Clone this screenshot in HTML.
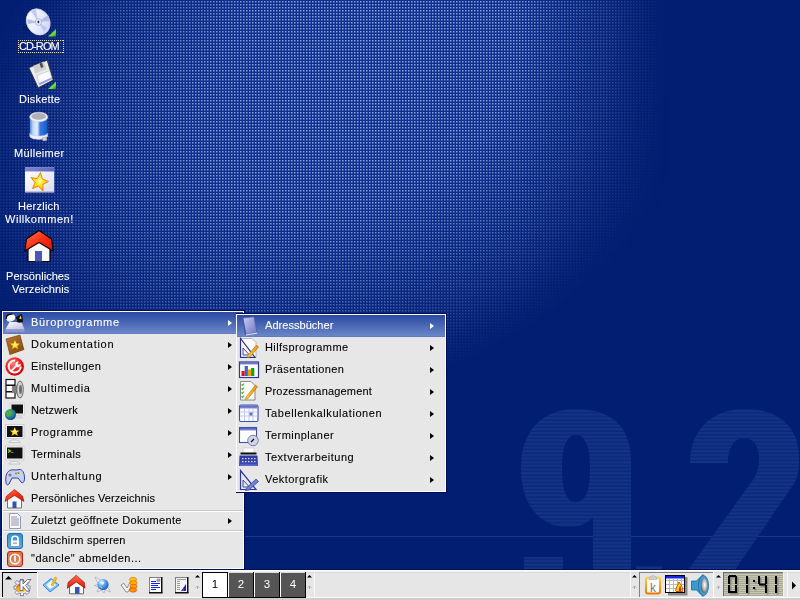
<!DOCTYPE html>
<html><head><meta charset="utf-8">
<style>
*{margin:0;padding:0;box-sizing:border-box}
html,body{width:800px;height:600px;overflow:hidden}
body{position:relative;background:#032274;font-family:"Liberation Sans",sans-serif;font-size:12px}
.abs{position:absolute}
#bg{position:absolute;left:0;top:0}
.lbl{position:absolute;color:#fff;font-size:11px;white-space:pre;line-height:13px;will-change:transform;-webkit-text-stroke:0.1px currentColor}
.menu{position:absolute;background:#e7e7e7;border:1px solid #fafafa;box-shadow:0 0 0 1px #000c58}
.it{position:absolute;left:0;right:0;height:22px}
.it .t{position:absolute;left:28px;top:3px;font-size:11px;line-height:14px;white-space:pre;color:#000;will-change:transform;-webkit-text-stroke:0.1px currentColor}
.hl{background:linear-gradient(#2a49a2,#6a86c8 95%,#5a72ba)}
.hl .t{color:#fff}
.arr{position:absolute;width:0;height:0;border-top:3.8px solid transparent;border-bottom:3.8px solid transparent;border-left:4.7px solid #000}
.hl .arr{border-left-color:#fff}
.ic{position:absolute}
.sep{position:absolute;left:0;right:0;height:2px;border-top:1px solid #c6c6c6;border-bottom:1px solid #fff}
#task{position:absolute;left:0;top:569px;width:800px;height:31px;background:#e6e6e6}
</style></head><body>

<!-- background -->
<svg id="bg" width="800" height="600" viewBox="0 0 800 600">
 <defs>
  <pattern id="grid" width="3" height="3" patternUnits="userSpaceOnUse">
   <rect width="3" height="3" fill="#12308c"/>
   <rect x="0" y="1" width="1" height="1" fill="#8eacdf"/>
   <rect x="1" y="1" width="1" height="1" fill="#4c6cc0"/>
   <rect x="0" y="2" width="1" height="1" fill="#4c6cc0"/>
   <rect x="1" y="2" width="1" height="1" fill="#3252a8"/>
  </pattern>
  <radialGradient id="fade" cx="360" cy="80" r="430" gradientUnits="userSpaceOnUse" gradientTransform="translate(360 80) rotate(-30) scale(1 0.70) translate(-360 -80)">
   <stop offset="0" stop-color="#fff" stop-opacity="1"/>
   <stop offset="0.4" stop-color="#fff" stop-opacity="0.92"/>
   <stop offset="0.65" stop-color="#fff" stop-opacity="0.6"/>
   <stop offset="0.82" stop-color="#fff" stop-opacity="0.3"/>
   <stop offset="0.93" stop-color="#fff" stop-opacity="0.08"/>
   <stop offset="1" stop-color="#fff" stop-opacity="0"/>
  </radialGradient>
  <linearGradient id="cutg" x1="520" y1="0" x2="668" y2="0" gradientUnits="userSpaceOnUse">
   <stop offset="0" stop-color="#fff" stop-opacity="1"/>
   <stop offset="0.6" stop-color="#fff" stop-opacity="0.55"/>
   <stop offset="1" stop-color="#fff" stop-opacity="0"/>
  </linearGradient>
  <mask id="cut"><rect width="800" height="600" fill="url(#cutg)"/></mask>
  <mask id="m"><rect width="800" height="600" fill="url(#fade)"/></mask>
  <pattern id="stripes" width="8" height="3.66" patternUnits="userSpaceOnUse">
   <rect width="8" height="3.66" fill="#143387"/>
   <rect y="2.2" width="8" height="1.46" fill="#0a287a"/>
  </pattern>
 </defs>
 <rect width="800" height="600" fill="#021e72"/>
 <g mask="url(#cut)"><rect width="800" height="600" fill="url(#grid)" mask="url(#m)"/></g>
 <rect x="0" y="536" width="800" height="1" fill="#18368e"/>
 <g fill="url(#stripes)" fill-rule="evenodd">
  <path d="M576 409 C543 409 521 430 521 468 C521 505 540 527 568 527 C580 527 588 523 593 517 L593 570 L631 570 L631 462 C631 424 609 409 576 409 Z M576 435 C586 435 590 448 590 468 C590 490 586 502 576 502 C566 502 562 490 562 468 C562 448 566 435 576 435 Z"/>
  <path d="M524 557 L563 557 L563 570 L524 570 Z"/>
  <path d="M636 566 L662 566 L662 570 L636 570 Z"/>
  <path d="M744 409 C712 409 690 430 690 463 L728 463 C728 448 734 438 744 438 C754 438 759 447 759 458 C759 468 757 474 753 480 L688 570 L735 570 L795 482 C798 476 799 468 799 458 C799 426 778 409 744 409 Z"/>
 </g>
</svg>

<!-- desktop icons -->
<svg width="80" height="300" viewBox="0 0 80 300" style="position:absolute;left:0;top:0">
 <defs>
  <linearGradient id="discg" x1="0" y1="0" x2="1" y2="1"><stop offset="0" stop-color="#ffffff"/><stop offset="0.5" stop-color="#e8ecff"/><stop offset="1" stop-color="#c8d0f0"/></linearGradient>
  <linearGradient id="greeng" x1="0" y1="0" x2="1" y2="1"><stop offset="0" stop-color="#108a10"/><stop offset="0.65" stop-color="#70e040"/><stop offset="1" stop-color="#10900c"/></linearGradient>
  <linearGradient id="trashg" x1="0" y1="0" x2="1" y2="0"><stop offset="0" stop-color="#4a80d8"/><stop offset="0.18" stop-color="#c0d8fa"/><stop offset="0.42" stop-color="#e4eeff"/><stop offset="0.58" stop-color="#3a7ae0"/><stop offset="1" stop-color="#1458c8"/></linearGradient>
  <linearGradient id="winbody" x1="0" y1="0" x2="1" y2="1"><stop offset="0" stop-color="#ffffff"/><stop offset="1" stop-color="#dcdcf4"/></linearGradient>
  <linearGradient id="titleg" x1="0" y1="0" x2="1" y2="0"><stop offset="0" stop-color="#8088d0"/><stop offset="1" stop-color="#5a68c0"/></linearGradient>
  <radialGradient id="starg" cx="0.5" cy="0.45" r="0.55"><stop offset="0" stop-color="#fff8a0"/><stop offset="0.6" stop-color="#ffd800"/><stop offset="1" stop-color="#f0a000"/></radialGradient>
  <linearGradient id="roofd" x1="0" y1="0" x2="1" y2="1"><stop offset="0" stop-color="#ff8060"/><stop offset="0.5" stop-color="#ff3010"/><stop offset="1" stop-color="#e01010"/></linearGradient>
 </defs>
 <!-- CD -->
 <ellipse cx="32" cy="28" rx="9" ry="4" fill="#001040" opacity="0.35"/>
 <ellipse cx="38.2" cy="21.9" rx="11.5" ry="13.5" transform="rotate(-28 38.2 21.9)" fill="url(#discg)" stroke="#c8d0e8" stroke-width="0.8"/>
 <path d="M38.2 21.9 L31 11 A13 13 0 0 1 36 9.5 Z M38.2 21.9 L47 28 A13 13 0 0 1 44 32 Z" fill="#b8c0ec" opacity="0.8"/>
 <path d="M38.2 21.9 L28 24 A13 13 0 0 1 27.5 19 Z M38.2 21.9 L48 15 A13 13 0 0 1 49.5 21 Z" fill="#a8b4e8" opacity="0.8"/>
 <ellipse cx="38.4" cy="22" rx="3" ry="3.4" fill="#f4f4ff" stroke="#8890b0" stroke-width="0.6"/>
 <ellipse cx="38.4" cy="22" rx="1" ry="1.4" fill="#203070"/>
 <path d="M48 36.5 L56 29 L56 36.5 Z" fill="url(#greeng)"/>
 <!-- floppy -->
 <path d="M28.9 67.7 L47.2 60.2 L53.2 80 L38.2 87.8 Z" fill="#ececec" stroke="#333" stroke-width="0.9" stroke-linejoin="round"/>
 <path d="M33 66 L44 61.5 L46.5 69 L35.5 73.5 Z" fill="#d0d0d0"/>
 <path d="M39.5 63.5 L42 62.5 L43.5 67 L41 68 Z" fill="#505050"/>
 <path d="M37 75.5 L49.5 70.5 L52 79 L39.5 85 Z" fill="#fafaff" stroke="#b0b0b0" stroke-width="0.5"/>
 <path d="M39 83 L51.5 77.5 L52 79 L39.5 85 Z" fill="#90a0f0"/>
 <path d="M48 89 L56 81.5 L56 89 Z" fill="url(#greeng)"/>
 <!-- trash -->
 <path d="M29.8 117 L29.8 136 C29.8 140 47.6 140 47.6 136 L47.6 117 Z" fill="url(#trashg)"/>
 <path d="M29.8 133 C29.8 137 47.6 137 47.6 133 L47.6 136 C47.6 140.5 29.8 140.5 29.8 136 Z" fill="#eef2fa" stroke="#b8c0d8" stroke-width="0.5"/>
 <ellipse cx="38.7" cy="117" rx="9.1" ry="4.8" fill="#f2f2f6" stroke="#c8c8d8" stroke-width="0.6"/>
 <ellipse cx="38.7" cy="116.4" rx="7.3" ry="3.3" fill="#b0b0bc"/>
 <path d="M42 138 L46.5 137 L47 140.5 L43 141 Z" fill="#d8d8e0" stroke="#808090" stroke-width="0.5"/>
 <!-- welcome window -->
 <rect x="25" y="167.5" width="29.2" height="24.8" fill="url(#winbody)"/>
 <rect x="25" y="167.5" width="29.2" height="4" fill="url(#titleg)"/>
 <rect x="25" y="191.5" width="29.2" height="1" fill="#9898c0"/>
 <path d="M40.5 172.5 L42.4 179 L48.5 181.5 L42.9 184.4 L43.0 191.0 L38.5 186.2 L32.5 188.5 L35.0 182.6 L31.0 177.5 L37.2 178.6 Z" fill="url(#starg)" stroke="#e08800" stroke-width="0.9" stroke-linejoin="round"/>
  <pattern id="dotsh" width="2" height="1" patternUnits="userSpaceOnUse"><rect width="1" height="1" fill="#f0dc70"/></pattern>
 <pattern id="dotsv" width="1" height="2" patternUnits="userSpaceOnUse"><rect width="1" height="1" fill="#f0dc70"/></pattern>
 <rect x="18" y="40" width="46" height="1" fill="url(#dotsh)"/>
 <rect x="18" y="52" width="46" height="1" fill="url(#dotsh)"/>
 <rect x="18" y="40" width="1" height="13" fill="url(#dotsv)"/>
 <rect x="63" y="40" width="1" height="13" fill="url(#dotsv)"/>
<!-- home -->
 <path d="M28 245 L28 261.5 L50 261.5 L50 245 L39 238 Z" fill="#fafafa" stroke="#000" stroke-width="1.2" stroke-linejoin="round"/>
 <path d="M39 230.5 L26.5 239 L24.8 251 L39 242.5 L53.2 251 L51.5 239 Z" fill="url(#roofd)" stroke="#000" stroke-width="1.1" stroke-linejoin="round"/>
 <rect x="35" y="251" width="7" height="10.5" fill="#4858b8"/>
</svg>
<!-- desktop labels -->
<div class="lbl" style="left:19px;top:40px;letter-spacing:-0.9px">CD-ROM</div>
<div class="lbl" style="left:19px;top:93px;letter-spacing:0.19px">Diskette</div>
<div class="lbl" style="left:14px;top:147px;letter-spacing:0.31px">Mülleimer</div>
<div class="lbl" style="left:18px;top:200px;letter-spacing:0.25px">Herzlich</div>
<div class="lbl" style="left:5px;top:213px;letter-spacing:0.53px">Willkommen!</div>
<div class="lbl" style="left:6px;top:270px;letter-spacing:0.05px">Persönliches</div>
<div class="lbl" style="left:12px;top:283px;letter-spacing:0.11px">Verzeichnis</div>

<!-- main menu -->
<div class="menu" id="mm" style="left:2px;top:311px;width:242px;height:258px">
 <div class="it hl" style="top:0"><span class="t" style="letter-spacing:0.71px">Büroprogramme</span><i class="arr" style="left:225px;top:8px"></i></div>
 <div class="it" style="top:22px"><span class="t" style="letter-spacing:0.71px">Dokumentation</span><i class="arr" style="left:225px;top:8px"></i></div>
 <div class="it" style="top:44px"><span class="t" style="letter-spacing:0.31px">Einstellungen</span><i class="arr" style="left:225px;top:8px"></i></div>
 <div class="it" style="top:66px"><span class="t" style="letter-spacing:0.64px">Multimedia</span><i class="arr" style="left:225px;top:8px"></i></div>
 <div class="it" style="top:88px"><span class="t" style="letter-spacing:0.13px">Netzwerk</span><i class="arr" style="left:225px;top:8px"></i></div>
 <div class="it" style="top:110px"><span class="t" style="letter-spacing:0.56px">Programme</span><i class="arr" style="left:225px;top:8px"></i></div>
 <div class="it" style="top:132px"><span class="t" style="letter-spacing:0.33px">Terminals</span><i class="arr" style="left:225px;top:8px"></i></div>
 <div class="it" style="top:154px"><span class="t" style="letter-spacing:0.69px">Unterhaltung</span><i class="arr" style="left:225px;top:8px"></i></div>
 <div class="it" style="top:176px"><span class="t" style="letter-spacing:0.07px">Persönliches Verzeichnis</span></div>
 <div class="sep" style="top:198px"></div>
 <div class="it" style="top:200px;height:18px"><span class="t" style="top:1px;letter-spacing:0.36px">Zuletzt geöffnete Dokumente</span><i class="arr" style="left:225px;top:6px"></i></div>
 <div class="sep" style="top:218px"></div>
 <div class="it" style="top:220px;height:18px"><span class="t" style="top:1px;letter-spacing:0.2px">Bildschirm sperren</span></div>
 <div class="it" style="top:238px;height:18px"><span class="t" style="top:1px;letter-spacing:0.49px">"dancle" abmelden...</span></div>
</div>

<!-- main menu icons -->
<svg width="30" height="260" viewBox="0 310 30 260" style="position:absolute;left:0;top:310px">
 <defs>
  <linearGradient id="deskg" x1="0" y1="0" x2="1" y2="1"><stop offset="0" stop-color="#ffffff"/><stop offset="1" stop-color="#b8b8e0"/></linearGradient>
  <linearGradient id="bookg" x1="0" y1="0" x2="1" y2="1"><stop offset="0" stop-color="#c07830"/><stop offset="1" stop-color="#7a4810"/></linearGradient>
  <radialGradient id="redg" cx="0.4" cy="0.35" r="0.7"><stop offset="0" stop-color="#ff8080"/><stop offset="0.6" stop-color="#f01818"/><stop offset="1" stop-color="#c00000"/></radialGradient>
  <radialGradient id="globeg" cx="0.4" cy="0.35" r="0.7"><stop offset="0" stop-color="#60c040"/><stop offset="0.6" stop-color="#2080a0"/><stop offset="1" stop-color="#103080"/></radialGradient>
  <linearGradient id="padg" x1="0" y1="0" x2="1" y2="1"><stop offset="0" stop-color="#e8f0ff"/><stop offset="1" stop-color="#5070c8"/></linearGradient>
  <linearGradient id="lockg" x1="0" y1="0" x2="0" y2="1"><stop offset="0" stop-color="#3890d0"/><stop offset="1" stop-color="#70a8d8"/></linearGradient>
  <linearGradient id="offg" x1="0" y1="0" x2="0" y2="1"><stop offset="0" stop-color="#e07040"/><stop offset="1" stop-color="#d89070"/></linearGradient>
  <radialGradient id="starm" cx="0.5" cy="0.45" r="0.55"><stop offset="0" stop-color="#fff8a0"/><stop offset="0.6" stop-color="#ffd800"/><stop offset="1" stop-color="#f0a000"/></radialGradient>
 </defs>
 <!-- buero -->
 <path d="M5.5 329.5 L9.5 322 L21.5 322 L24.5 329.5 Z" fill="url(#deskg)"/>
 <path d="M5.5 329.5 L24.5 329.5 L24.5 332 L5.5 332 Z" fill="#8e96d0"/>
 <ellipse cx="10.8" cy="318" rx="4.6" ry="3.4" transform="rotate(-18 10.8 318)" fill="#f6f6f6"/>
 <path d="M6.3 318.8 C6 315.5 9 313.6 12.5 314.2" fill="none" stroke="#000" stroke-width="1.3"/>
 <path d="M15.5 317.5 L21.8 313.8 L23 320.5 L18.5 321.5 Z" fill="#0c0c0c"/>
 <path d="M19 318.6 L20.8 315.6 L21.6 319.2 Z" fill="#f0e040"/>
 <ellipse cx="19.8" cy="321.3" rx="3.2" ry="1.4" fill="#0c0c0c"/>
 <!-- doku book -->
 <path d="M6 339 L20 335 L24 350 L10 355 Z" fill="url(#bookg)" stroke="#6a3a08" stroke-width="0.6"/>
 <path d="M10 355 L24 350 L24.3 351.5 L10.5 356 Z" fill="#f0e8d0"/>
 <path d="M15 340 L16.4 343.6 L20 343.6 L17.2 345.9 L18.3 349.5 L15 347.3 L11.7 349.5 L12.8 345.9 L10 343.6 L13.6 343.6 Z" fill="url(#starm)"/>
 <!-- einstellungen -->
 <circle cx="14.7" cy="366.5" r="9.3" fill="url(#redg)"/>
 <circle cx="14.7" cy="366.5" r="6" fill="none" stroke="#fff" stroke-width="2" stroke-dasharray="28 10"/>
 <path d="M10 371 L15.5 365.5 C14.5 363 16.5 361 19 361.5 L17.5 363.5 L18.8 364.8 L20.8 363.4 C21 366 19 368 16.5 367 L11 372.5 Z" fill="#fff"/>
 <!-- multimedia -->
 <rect x="6" y="379.5" width="9" height="18.5" fill="#fff" stroke="#111" stroke-width="1.2"/>
 <rect x="6" y="384.5" width="9" height="1.5" fill="#111"/><rect x="6" y="391" width="9" height="1.5" fill="#111"/>
 <path d="M12 386 L16 386 L21 381 L21 398 L16 393 L12 393 Z" fill="#808080"/>
 <ellipse cx="20" cy="389.5" rx="3.3" ry="8.5" fill="#d0d0d0" stroke="#505050" stroke-width="0.8"/>
 <ellipse cx="20.5" cy="389.5" rx="1.5" ry="4.5" fill="#707070"/>
 <!-- netzwerk -->
 <rect x="10" y="403" width="14.5" height="12" fill="#f0f0f0" stroke="#c8c8c8" stroke-width="0.6"/>
 <rect x="11.5" y="404.5" width="11.5" height="9" fill="#101010"/>
 <path d="M13 418 L22 418 L21 416 L14 416 Z" fill="#e8e8e8" stroke="#b0b0b0" stroke-width="0.5"/>
 <circle cx="10.5" cy="414.5" r="5.5" fill="url(#globeg)"/>
 <path d="M8 411 C10 410 12 411 11 413 C9 414 10 416 8 417 C6 415 6 412 8 411 Z" fill="#50b030"/>
 <!-- programme -->
 <rect x="5.5" y="424.5" width="18.5" height="14" fill="#f4f4f4" stroke="#c0c0c0" stroke-width="0.6"/>
 <rect x="7" y="426" width="15.5" height="11" fill="#101018"/>
 <path d="M14.7 427 L16.1 430.4 L19.7 430.4 L16.9 432.6 L18 436 L14.7 434 L11.4 436 L12.5 432.6 L9.7 430.4 L13.3 430.4 Z" fill="url(#starm)"/>
 <path d="M9 442.5 C9 439 20 439 20 442.5 Z" fill="#f0f0f0" stroke="#a8a8a8" stroke-width="0.6"/>
 <!-- terminals -->
 <rect x="5.5" y="446" width="18.5" height="14" fill="#f4f4f4" stroke="#c0c0c0" stroke-width="0.6"/>
 <rect x="7" y="447.5" width="15.5" height="11" fill="#101010"/>
 <path d="M8 449.5 L10.5 451 L8 452.5" stroke="#a0e020" stroke-width="1.2" fill="none"/>
 <rect x="11" y="452" width="2.5" height="1" fill="#708020"/>
 <path d="M9 464 C9 460.5 20 460.5 20 464 Z" fill="#f0f0f0" stroke="#a8a8a8" stroke-width="0.6"/>
 <!-- unterhaltung gamepad -->
 <path d="M6 482 C5 476 7 471 11 470 C14 469.5 16 470.5 19 469.5 C22.5 469 24.5 473 24.5 478 C24.5 482 23 484 21 482 L18 478 L12 478 L9 484 C7 486 6 484 6 482 Z" fill="#c8d0f0" stroke="#3040a0" stroke-width="1"/>
 <circle cx="10" cy="475" r="1.6" fill="#808090"/>
 <circle cx="16" cy="473.5" r="1" fill="#e06040"/><circle cx="18.5" cy="473" r="1" fill="#40b040"/>
 <!-- home -->
 <path d="M7.5 497 L7.5 508 L21.5 508 L21.5 497 L14.5 492.5 Z" fill="#fafafa" stroke="#707070" stroke-width="1"/>
 <path d="M14.5 489.5 L6.5 496 L5 501.5 L14.5 495.5 L24 501.5 L22.5 496 Z" fill="url(#roofd)" stroke="#600" stroke-width="0.5"/>
 <rect x="12.5" y="501.5" width="4" height="6.5" fill="#3850b0"/>
 <!-- doc -->
 <path d="M9.5 513.5 L17.5 513.5 L20.5 516.5 L20.5 528.5 L9.5 528.5 Z" fill="#f8f8ff" stroke="#8080a8" stroke-width="0.8"/>
 <g stroke="#7a7a98" stroke-width="0.8"><line x1="11" y1="517" x2="17" y2="517"/><line x1="11" y1="519" x2="19" y2="519"/><line x1="11" y1="521" x2="19" y2="521"/><line x1="11" y1="523" x2="19" y2="523"/><line x1="11" y1="525" x2="19" y2="525"/></g>
 <!-- lock -->
 <rect x="7.5" y="533.5" width="15" height="15" rx="2.5" fill="url(#lockg)" stroke="#1a70b0" stroke-width="1"/>
 <path d="M12 541 L12 538.5 C12 535.5 18 535.5 18 538.5 L18 541" fill="none" stroke="#fff" stroke-width="1.6"/>
 <rect x="11" y="540.5" width="8" height="5.5" rx="1" fill="#fff"/>
 <rect x="13" y="542.5" width="4" height="1.2" fill="#70a0d0"/>
 <!-- logout -->
 <rect x="7.5" y="551.5" width="15" height="15" rx="2.5" fill="url(#offg)" stroke="#c02010" stroke-width="1"/>
 <circle cx="15" cy="559" r="4.8" fill="none" stroke="#fff" stroke-width="1.5"/>
 <rect x="14.2" y="555.5" width="1.6" height="6" fill="#fff"/>
</svg>
<!-- sub menu -->
<div class="menu" id="sm" style="left:236px;top:314px;width:210px;height:178px;box-shadow:0 -1px 0 0 #000c58,1px 0 0 0 #000c58,0 1px 0 0 #000c58,1px 1px 0 0 #000c58">
 <div class="it hl" style="top:0"><span class="t" style="letter-spacing:0.04px">Adressbücher</span><i class="arr" style="left:193px;top:8px"></i></div>
 <div class="it" style="top:22px"><span class="t" style="letter-spacing:0.42px">Hilfsprogramme</span><i class="arr" style="left:193px;top:8px"></i></div>
 <div class="it" style="top:44px"><span class="t" style="letter-spacing:0.38px">Präsentationen</span><i class="arr" style="left:193px;top:8px"></i></div>
 <div class="it" style="top:66px"><span class="t" style="letter-spacing:0.18px">Prozessmanagement</span><i class="arr" style="left:193px;top:8px"></i></div>
 <div class="it" style="top:88px"><span class="t" style="letter-spacing:0.57px">Tabellenkalkulationen</span><i class="arr" style="left:193px;top:8px"></i></div>
 <div class="it" style="top:110px"><span class="t" style="letter-spacing:0.46px">Terminplaner</span><i class="arr" style="left:193px;top:8px"></i></div>
 <div class="it" style="top:132px"><span class="t" style="letter-spacing:0.49px">Textverarbeitung</span><i class="arr" style="left:193px;top:8px"></i></div>
 <div class="it" style="top:154px"><span class="t" style="letter-spacing:0.45px">Vektorgrafik</span><i class="arr" style="left:193px;top:8px"></i></div>
</div>

<!-- sub menu icons -->
<svg width="26" height="180" viewBox="236 314 26 180" style="position:absolute;left:236px;top:314px">
 <defs>
  <linearGradient id="abookg" x1="0" y1="0" x2="1" y2="1"><stop offset="0" stop-color="#c8cef0"/><stop offset="1" stop-color="#6a74c0"/></linearGradient>
  <linearGradient id="pencilg" x1="0" y1="0" x2="1" y2="0"><stop offset="0" stop-color="#ffd040"/><stop offset="1" stop-color="#f09000"/></linearGradient>
  <linearGradient id="winblue" x1="0" y1="0" x2="0" y2="1"><stop offset="0" stop-color="#5060c0"/><stop offset="1" stop-color="#8890d8"/></linearGradient>
  <linearGradient id="typeg" x1="0" y1="0" x2="0" y2="1"><stop offset="0" stop-color="#2838a0"/><stop offset="1" stop-color="#4050b8"/></linearGradient>
 </defs>
 <!-- adressbuecher -->
 <path d="M243 318 L254 316.8 L257 332.5 L246 334.5 Z" fill="url(#abookg)" stroke="#4850a0" stroke-width="0.6"/>
 <path d="M243 318 L246 334.5 L245 335.5 L242 319.5 Z" fill="#5058a8"/>
 <path d="M246 334.5 L257 332.5 L257.3 333.6 L246.3 335.6 Z" fill="#e0e4ff"/>
 <!-- hilfsprogramme -->
 <path d="M240.5 338.5 L252 338.5 L256 342.5 L256 357 L240.5 357 Z" fill="#fafaff" stroke="#9090b0" stroke-width="0.6"/>
 <path d="M240.5 338.5 L240.5 357.5 L255 357.5 Z" fill="none" stroke="#2a3090" stroke-width="1.2"/>
 <path d="M243 348 L243 355 L249.5 355 Z" fill="none" stroke="#2a3090" stroke-width="0.9"/>
 <path d="M248 355 L256.5 345 L258.5 347 L250 357 L247.5 357.5 Z" fill="url(#pencilg)" stroke="#a06000" stroke-width="0.5"/>
 <!-- praesentationen -->
 <rect x="239.5" y="362" width="19" height="15.5" fill="#fff" stroke="#2a3898" stroke-width="1.2"/>
 <rect x="240" y="362.5" width="18" height="2" fill="url(#winblue)"/>
 <rect x="241.5" y="371" width="3.2" height="5" fill="#e01020"/>
 <rect x="244.7" y="366" width="3.2" height="10" fill="#4060c0"/>
 <rect x="247.9" y="369.5" width="3.2" height="6.5" fill="#f0a000"/>
 <rect x="251.1" y="368" width="3.2" height="8" fill="#10a010"/>
 <!-- prozessmanagement -->
 <path d="M240.5 381.5 L251 381.5 L255 385.5 L255 400 L240.5 400 Z" fill="#fafafa" stroke="#707070" stroke-width="0.8"/>
 <g stroke="#40b020" stroke-width="1.1" fill="none"><path d="M241.5 384.5 L242.5 385.5 L244 383.5"/><path d="M241.5 388.5 L242.5 389.5 L244 387.5"/><path d="M241.5 392.5 L242.5 393.5 L244 391.5"/><path d="M241.5 396.5 L242.5 397.5 L244 395.5"/></g>
 <path d="M246 397 L255.5 385 L257.5 386.8 L248 398.5 L245.5 399.5 Z" fill="url(#pencilg)" stroke="#a06000" stroke-width="0.5"/>
 <!-- tabellenkalkulationen -->
 <rect x="239.5" y="405" width="18.5" height="16.5" rx="1.5" fill="#fafaff" stroke="#4050b0" stroke-width="1.1"/>
 <rect x="240" y="405.5" width="17.5" height="3" fill="url(#winblue)"/>
 <g stroke="#b8c0e8" stroke-width="0.8"><line x1="240" y1="412" x2="257.5" y2="412"/><line x1="240" y1="416" x2="257.5" y2="416"/><line x1="244.5" y1="408.5" x2="244.5" y2="421"/><line x1="249" y1="408.5" x2="249" y2="421"/><line x1="253" y1="408.5" x2="253" y2="421"/></g>
 <rect x="249.5" y="412.5" width="3" height="3" fill="#6070c0"/>
 <!-- terminplaner -->
 <rect x="239.5" y="427.5" width="17" height="15" fill="#fff" stroke="#4050b0" stroke-width="1.1"/>
 <rect x="240" y="428" width="16" height="2.5" fill="url(#winblue)"/>
 <circle cx="253" cy="440.5" r="5.3" fill="#d0d4e8" stroke="#606890" stroke-width="0.8"/>
 <path d="M251 442 L254 439" stroke="#000" stroke-width="1.3"/>
 <!-- textverarbeitung -->
 <rect x="243" y="448" width="11" height="5" fill="#fafafa" stroke="#c0c0c0" stroke-width="0.5"/>
 <rect x="240.5" y="452.5" width="16" height="2" fill="#101010"/>
 <path d="M239.5 455.5 L257.5 455.5 L258 466 L239 466 Z" fill="url(#typeg)"/>
 <g fill="#d8dcf0"><rect x="242" y="458" width="1.5" height="1.2"/><rect x="245" y="458" width="1.5" height="1.2"/><rect x="248" y="458" width="1.5" height="1.2"/><rect x="251" y="458" width="1.5" height="1.2"/><rect x="254" y="458" width="1.5" height="1.2"/>
 <rect x="242" y="461" width="1.5" height="1.2"/><rect x="245" y="461" width="1.5" height="1.2"/><rect x="248" y="461" width="1.5" height="1.2"/><rect x="251" y="461" width="1.5" height="1.2"/><rect x="254" y="461" width="1.5" height="1.2"/></g>
 <rect x="240" y="464.5" width="17" height="1.5" fill="#6070c0"/>
 <!-- vektorgrafik -->
 <path d="M240.5 470.5 L240.5 489.5 L256 489.5 Z" fill="none" stroke="#3038a0" stroke-width="1.2"/>
 <path d="M243 480 L243 487 L249.5 487 Z" fill="none" stroke="#3038a0" stroke-width="0.9"/>
 <path d="M246.5 488 L256 479 L258.5 481.5 L249 490 L245.5 490.5 Z" fill="#7080d0" stroke="#3040a0" stroke-width="0.7"/>
</svg>
<!-- taskbar -->
<div id="task">
 <svg width="800" height="31" viewBox="0 569 800 31" style="position:absolute;left:0;top:0">
  <defs>
   <linearGradient id="lcd" x1="0" y1="0" x2="0" y2="1"><stop offset="0" stop-color="#b8b8a4"/><stop offset="1" stop-color="#c4c4b0"/></linearGradient>
   <pattern id="lcdstripe" width="4" height="2" patternUnits="userSpaceOnUse"><rect width="4" height="2" fill="#c6c6b2"/><rect y="1" width="4" height="1" fill="#a9a996"/></pattern>
   <radialGradient id="ballg" cx="0.35" cy="0.3" r="0.8"><stop offset="0" stop-color="#e8f4ff"/><stop offset="0.5" stop-color="#4f9be8"/><stop offset="1" stop-color="#1a4fb0"/></radialGradient>
   <linearGradient id="roofg" x1="0" y1="0" x2="0" y2="1"><stop offset="0" stop-color="#ff7040"/><stop offset="1" stop-color="#e01010"/></linearGradient>
   <linearGradient id="klipg" x1="0" y1="0" x2="0" y2="1"><stop offset="0" stop-color="#ffd040"/><stop offset="1" stop-color="#f07800"/></linearGradient>
   <radialGradient id="spkg" cx="0.6" cy="0.45" r="0.6"><stop offset="0" stop-color="#ffffff"/><stop offset="0.6" stop-color="#b0b0b0"/><stop offset="1" stop-color="#505050"/></radialGradient>
   <radialGradient id="kball" cx="0.6" cy="0.65" r="0.7"><stop offset="0" stop-color="#fff040"/><stop offset="0.55" stop-color="#ffc000"/><stop offset="1" stop-color="#f03000"/></radialGradient>
  </defs>
  <rect x="0" y="569" width="800" height="1" fill="#00105c"/>
  <rect x="0" y="570" width="800" height="1" fill="#ffffff"/>
  <rect x="0" y="571" width="800" height="1" fill="#f2f2f2"/>
  <rect x="0" y="572" width="800" height="1" fill="#dadada"/>
  <rect x="0" y="573" width="800" height="24" fill="#e6e6e6"/>
  <rect x="0" y="597" width="800" height="1" fill="#fafafa"/>
  <rect x="0" y="598" width="800" height="2" fill="#cdcdcd"/>
  <!-- K button sunken -->
  <rect x="2" y="572" width="36" height="26" fill="#e2e2e2"/>
  <rect x="2" y="572" width="35" height="1" fill="#000"/>
  <rect x="2" y="572" width="1" height="25" fill="#000"/>
  <rect x="37" y="572" width="1" height="26" fill="#fff"/>
  <path d="M5 579.5 L8.5 576 L12 579.5 Z" fill="#000"/>
  <!-- K gear -->
  <g>
   <g fill="#ececf6" stroke="#6a6a90" stroke-width="0.7">
    <circle cx="22" cy="587.5" r="6.5"/>
    <rect x="20.5" y="579.3" width="3" height="3"/><rect x="20.5" y="592.7" width="3" height="3"/>
    <rect x="14" y="586" width="3" height="3"/><rect x="27" y="586" width="3" height="3"/>
    <rect x="15.5" y="581" width="3" height="3" transform="rotate(45 17 582.5)"/><rect x="25.5" y="591" width="3" height="3" transform="rotate(45 27 592.5)"/>
    <rect x="15.5" y="591" width="3" height="3" transform="rotate(45 17 592.5)"/><rect x="25.5" y="581" width="3" height="3" transform="rotate(45 27 582.5)"/>
   </g>
   <circle cx="22" cy="587.5" r="6" fill="#e8e8f4"/>
   <path d="M16 592 A7 7 0 0 0 29 592 L28 594 A8 8 0 0 1 17 594 Z" fill="#5a5a88" opacity="0.6"/>
   <circle cx="21" cy="588" r="4.6" fill="url(#kball)"/>
   <path d="M20 580 L23 580 L23 584 L27.5 579.5 L31 579.5 L25.5 585.5 L30 591 L26.5 591 L23 586.5 L23 590.5 L20 590.5 Z" fill="#fff" stroke="#404060" stroke-width="0.7" stroke-linejoin="round"/>
  </g>
  <!-- launcher 1: note with pen -->
  <g>
   <path d="M43 585 L51 578.5 L59 585 L50 592 Z" fill="#7ec0f8" stroke="#3a88e0" stroke-width="1"/>
   <path d="M46 585 L52 580 L56 585 L50 589 Z" fill="#f4f8ff"/>
   <path d="M51 585 L55 577 L57 578 L53 586 Z" fill="#f0c020" stroke="#c89000" stroke-width="0.5"/>
  </g>
  <!-- launcher 2: house -->
  <g>
   <path d="M69.5 586.5 L76.2 581.5 L83.5 586.5 L83.5 593.8 L69.5 593.8 Z" fill="#fafafa" stroke="#6a6a6a" stroke-width="1"/>
   <path d="M67.3 588.3 L68 582.5 L76.2 575.2 L84.4 582.5 L85.1 588.3 L76.2 582 Z" fill="url(#roofg)" stroke="#700000" stroke-width="0.5" stroke-linejoin="round"/>
   <rect x="75" y="587" width="4.5" height="6.8" fill="#3850b0"/>
  </g>
  <!-- launcher 3: konqueror globe -->
  <g transform="translate(103 584.5)">
   <g fill="#f4f4f8" stroke="#9a9ab0" stroke-width="0.6">
    <path d="M-8 -7.5 L-2 -4 L-5 -1 Z"/>
    <path d="M-8.5 1 L-3.5 -0.5 L-3.5 2.5 Z"/>
    <path d="M-6 7.5 L-3 2 L0 5 Z"/>
    <path d="M7.5 7.5 L1.5 5 L4.5 2 Z"/>
    <path d="M1 8.5 L-1.5 4.5 L2.5 4.5 Z"/>
   </g>
   <circle r="5.6" fill="url(#ballg)"/>
   <path d="M-3 -2 C-1 -4 2 -3 1 -1 C0 1 -2 0 -3 -2 Z" fill="#e8f6ff" opacity="0.85"/>
   <path d="M-4 2 C-2 1 0 3 -1 4 Z" fill="#c8e4ff" opacity="0.7"/>
  </g>
  <!-- launcher 4: check + orange -->
  <g>
   <path d="M121 585 L123.8 583.2 L127 588 L132.5 577.5 L135 579 L128 592 L126 592 Z" fill="#f0f0f0" stroke="#7a7a7a" stroke-width="0.8" stroke-linejoin="round"/>
   <ellipse cx="133" cy="579.5" rx="3.6" ry="2.2" fill="#ffc020" stroke="#e06000" stroke-width="0.5"/>
   <ellipse cx="133.5" cy="583" rx="3.6" ry="2.2" fill="#ffb000" stroke="#e05000" stroke-width="0.5"/>
   <ellipse cx="133.5" cy="586.5" rx="3.6" ry="2.2" fill="#ffa000" stroke="#d84000" stroke-width="0.5"/>
   <ellipse cx="133" cy="590" rx="3.6" ry="2.2" fill="#ff9000" stroke="#d03000" stroke-width="0.5"/>
  </g>
  <!-- launcher 5: text doc -->
  <g>
   <rect x="149" y="577" width="13" height="16" fill="#fff"/>
   <rect x="149" y="577" width="12" height="1" fill="#808080"/><rect x="149" y="577" width="1" height="15" fill="#808080"/>
   <rect x="161" y="577" width="1.5" height="16" fill="#111"/><rect x="149" y="592" width="13.5" height="1.5" fill="#111"/>
   <rect x="157" y="579" width="3" height="2.5" fill="#a8a8a8" stroke="#707070" stroke-width="0.5"/>
   <g fill="#1020f0"><rect x="151" y="581" width="5" height="1"/><rect x="151" y="583" width="9" height="1"/><rect x="151" y="585" width="7" height="1"/><rect x="151" y="587" width="9" height="1"/><rect x="151" y="589" width="5" height="1"/></g>
  </g>
  <!-- launcher 6: spreadsheet doc -->
  <g>
   <rect x="175" y="577" width="13" height="16" fill="#f4f4f4"/>
   <rect x="175" y="577" width="12" height="1" fill="#808080"/><rect x="175" y="577" width="1" height="15" fill="#808080"/>
   <rect x="187" y="577" width="1.5" height="16" fill="#111"/><rect x="175" y="592" width="13.5" height="1.5" fill="#111"/>
   <g fill="#9a9a9a"><rect x="177" y="579" width="9" height="1"/><rect x="177" y="581" width="3" height="1"/><rect x="177" y="583" width="3" height="1"/><rect x="177" y="585" width="3" height="1"/><rect x="177" y="587" width="3" height="1"/><rect x="177" y="589" width="3" height="1"/></g>
   <path d="M181 591 L186 584 L186 591 Z" fill="#2020d0"/><path d="M181 591 L184 588 L184 591 Z" fill="#d02040"/>
  </g>
  <!-- handles/arrows -->
  <g fill="#000">
   <path d="M195 577.5 L197.5 575 L200 577.5 Z"/>
   <path d="M307 577.5 L309.5 575 L312 577.5 Z"/>
   <path d="M632 577.5 L634.5 575 L637 577.5 Z"/>
   <path d="M716 577.5 L718.5 575 L721 577.5 Z"/>
  </g>
  <g stroke="#a8a8a8" stroke-width="1" fill="none">
   <path d="M196 587.5 L197.5 586 L199 587.5 M197.5 586 L197.5 589"/>
   <path d="M308 587.5 L309.5 586 L311 587.5 M309.5 586 L309.5 589"/>
   <path d="M633 587.5 L634.5 586 L636 587.5 M634.5 586 L634.5 589"/>
   <path d="M717 587.5 L718.5 586 L720 587.5 M718.5 586 L718.5 589"/>
  </g>
  <rect x="314" y="572" width="1" height="26" fill="#f8f8f8"/>
  <rect x="630" y="572" width="1" height="26" fill="#f8f8f8"/>
  <!-- pager -->
  <rect x="202" y="572" width="26" height="26" fill="#000"/>
  <rect x="203" y="573" width="24" height="24" fill="#fff"/>
  <rect x="228" y="573" width="1" height="24" fill="#fff"/>
  <rect x="229" y="573" width="24" height="24" fill="#555"/>
  <rect x="253" y="572" width="1" height="26" fill="#000"/>
  <rect x="254" y="573" width="1" height="24" fill="#fff"/>
  <rect x="255" y="573" width="24" height="24" fill="#555"/>
  <rect x="279" y="572" width="1" height="26" fill="#000"/>
  <rect x="280" y="573" width="1" height="24" fill="#fff"/>
  <rect x="281" y="573" width="24" height="24" fill="#555"/>
  <rect x="305" y="572" width="1" height="26" fill="#000"/>
  <rect x="202" y="597" width="104" height="1" fill="#000"/>
  <!-- systray frame -->
  <rect x="639" y="572" width="75" height="1" fill="#808080"/>
  <rect x="639" y="572" width="1" height="25" fill="#808080"/>
  <rect x="713" y="572" width="1" height="26" fill="#fff"/>
  <rect x="639" y="597" width="75" height="1" fill="#fff"/>
  <!-- klipper -->
  <g>
   <rect x="646" y="577.5" width="14" height="16" rx="2" fill="#fafafa" stroke="url(#klipg)" stroke-width="2"/>
   <path d="M649 579.5 C649 574.5 657 574.5 657 579.5 Z" fill="#d0d0d0" stroke="#a8a8a8" stroke-width="0.6"/>
   <text x="653" y="591.5" font-size="12" text-anchor="middle" fill="#7a7a7a" font-family="Liberation Sans">k</text>
  </g>
  <!-- korganizer -->
  <g>
   <rect x="668" y="577" width="19.5" height="18.5" fill="#8a8a8a"/>
   <rect x="665.5" y="575.5" width="19" height="17" fill="#fff" stroke="#000" stroke-width="1"/>
   <rect x="666" y="576" width="18" height="2.5" fill="#1828e0"/>
   <g stroke="#b8b8b8" stroke-width="1"><line x1="666" y1="580.5" x2="684" y2="580.5"/><line x1="666" y1="584.5" x2="684" y2="584.5"/><line x1="666" y1="588.5" x2="684" y2="588.5"/><line x1="669.5" y1="578.5" x2="669.5" y2="592"/><line x1="673.5" y1="578.5" x2="673.5" y2="592"/><line x1="677.5" y1="578.5" x2="677.5" y2="592"/><line x1="681.5" y1="578.5" x2="681.5" y2="592"/></g>
   <path d="M676 591.5 C675 588.5 677.5 586 679 582 C681 585 683.5 588 682.5 591.5 Z" fill="#f8e000" stroke="#c02000" stroke-width="0.8"/>
   <path d="M679 591 C678 589 679.5 587.5 680 585.5 C681 587.5 681.5 589 681 591 Z" fill="#d03000"/>
  </g>
  <!-- speaker -->
  <g>
   <path d="M691.5 581 L696.5 581 L703 574.5 L703 596.5 L696.5 590 L691.5 590 Z" fill="#3a9ad0" stroke="#1a6a9a" stroke-width="0.8" stroke-linejoin="round"/>
   <ellipse cx="703.5" cy="585.5" rx="5" ry="10" fill="#40a0d8" stroke="#1a6a9a" stroke-width="0.8"/>
   <ellipse cx="704" cy="585.5" rx="3.2" ry="7.5" fill="url(#spkg)"/>
  </g>
  <!-- clock -->
  <rect x="723" y="572" width="61" height="25" fill="#707070"/>
  <rect x="724" y="573" width="60" height="24" fill="url(#lcdstripe)"/>
  <rect x="783" y="572" width="1" height="25" fill="#f0f0f0"/>
  <rect x="723" y="596" width="61" height="1" fill="#f0f0f0"/>
  <g fill="#8a8a7c" transform="translate(1.5 1.5)"><rect x="729" y="575" width="7" height="2"/><rect x="735" y="576" width="2" height="8"/><rect x="735" y="585" width="2" height="8"/><rect x="729" y="591" width="7" height="2"/><rect x="728" y="585" width="2" height="8"/><rect x="728" y="576" width="2" height="8"/><rect x="746" y="576" width="2" height="8"/><rect x="746" y="585" width="2" height="8"/><rect x="753" y="580" width="2" height="2"/><rect x="753" y="587" width="2" height="2"/><rect x="765" y="576" width="2" height="8"/><rect x="765" y="585" width="2" height="8"/><rect x="758" y="576" width="2" height="8"/><rect x="759" y="583.5" width="7" height="2"/><rect x="775" y="576" width="2" height="8"/><rect x="775" y="585" width="2" height="8"/></g>
  <g fill="#000"><rect x="729" y="575" width="7" height="2"/><rect x="735" y="576" width="2" height="8"/><rect x="735" y="585" width="2" height="8"/><rect x="729" y="591" width="7" height="2"/><rect x="728" y="585" width="2" height="8"/><rect x="728" y="576" width="2" height="8"/><rect x="746" y="576" width="2" height="8"/><rect x="746" y="585" width="2" height="8"/><rect x="753" y="580" width="2" height="2"/><rect x="753" y="587" width="2" height="2"/><rect x="765" y="576" width="2" height="8"/><rect x="765" y="585" width="2" height="8"/><rect x="758" y="576" width="2" height="8"/><rect x="759" y="583.5" width="7" height="2"/><rect x="775" y="576" width="2" height="8"/><rect x="775" y="585" width="2" height="8"/></g>
  <!-- hide button -->
  <rect x="787" y="572" width="1" height="26" fill="#f8f8f8"/>
  <path d="M792 581.5 L796 585.5 L792 589.5 Z" fill="#000"/>
 </svg>
 <div style="position:absolute;left:203px;top:3px;width:24px;height:24px;line-height:24px;text-align:center;color:#000;font-size:11.5px;will-change:transform">1</div>
 <div style="position:absolute;left:229px;top:3px;width:24px;height:24px;line-height:24px;text-align:center;color:#fff;font-size:11.5px;will-change:transform">2</div>
 <div style="position:absolute;left:255px;top:3px;width:24px;height:24px;line-height:24px;text-align:center;color:#fff;font-size:11.5px;will-change:transform">3</div>
 <div style="position:absolute;left:281px;top:3px;width:24px;height:24px;line-height:24px;text-align:center;color:#fff;font-size:11.5px;will-change:transform">4</div>
</div>

</body></html>
